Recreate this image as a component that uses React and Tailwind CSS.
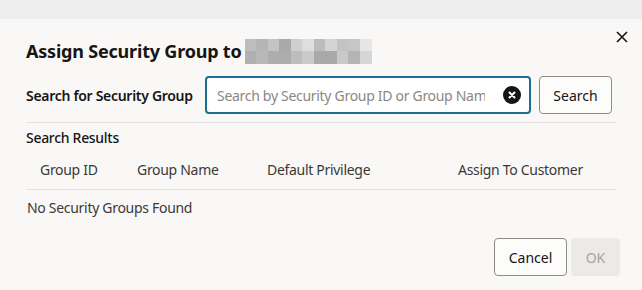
import React, { useState } from 'react';

const mosaicTop = ['#bdbdbd', '#b5b5b5', '#c4c4c4', '#a9a9a9', '#cfcfcf', '#dedede', '#bcbcbc', '#d4d4d4', '#c3c3c3', '#c6c6c6', '#e6e6e6'];
const mosaicBottom = ['#b0b0b0', '#b8b8b8', '#adadad', '#adadad', '#bdbdbd', '#cacaca', '#a9a9a9', '#a8a8a8', '#c9c9c9', '#b4b4b4', '#d6d6d6'];

const App = () => {
    const [query, setQuery] = useState('');

    return (
        <div className="w-[642px] h-[290px] bg-[#f9f8f6] text-[#161513] overflow-hidden" style={{ fontFamily: '"Noto Sans", sans-serif' }}>
            {/* blurred page behind the dialog */}
            <div className="h-[19px] bg-[#ededed]" />

            <div className="px-[26px] pt-[8px]">
                {/* Header */}
                <div className="flex items-start justify-between">
                    <div className="flex items-center gap-[3px] pt-[11px]">
                        <h1 className="text-[18px] font-bold leading-[26px] tracking-[-0.2px]">Assign Security Group to</h1>
                        <div className="flex flex-col w-[127px] h-[25px]">
                            <div className="flex flex-1">
                                {mosaicTop.map((c, i) => <div key={i} className="flex-1" style={{ background: c }} />)}
                            </div>
                            <div className="flex flex-1">
                                {mosaicBottom.map((c, i) => <div key={i} className="flex-1" style={{ background: c }} />)}
                            </div>
                        </div>
                    </div>
                    <button className="-mt-[2px] -mr-[18px] w-[24px] h-[24px] flex items-center justify-center text-[#161513]">
                        <svg width="12" height="12" viewBox="0 0 12 12" fill="none" stroke="currentColor" strokeWidth="1.6">
                            <path d="M1 1L11 11M11 1L1 11" />
                        </svg>
                    </button>
                </div>

                {/* Search row */}
                <div className="flex items-center mt-[12px] pb-[8px] border-b border-[#e4e2df]">
                    <label className="text-[14px] font-semibold w-[179px] shrink-0 tracking-[-0.3px]">Search for Security Group</label>
                    <div className="relative w-[326px] h-[38px]">
                        <input
                            type="text"
                            value={query}
                            onChange={(e) => setQuery(e.target.value)}
                            placeholder="Search by Security Group ID or Group Name"
                            className="w-full h-full pl-[10px] pr-[44px] border-2 border-[#1d6f8f] rounded-[4px] bg-white text-[14px] tracking-[-0.3px] placeholder:text-[#8a8783] outline-none"
                        />
                        <div className="absolute right-[10px] top-1/2 -translate-y-1/2 w-[18px] h-[18px] rounded-full bg-[#161513] flex items-center justify-center">
                            <svg width="8" height="8" viewBox="0 0 8 8" stroke="white" strokeWidth="2" strokeLinecap="round">
                                <path d="M1.5 1.5L6.5 6.5M6.5 1.5L1.5 6.5" />
                            </svg>
                        </div>
                    </div>
                    <button className="ml-[8px] w-[73px] h-[38px] border border-[#8e8c88] rounded-[4px] bg-[#fcfcfb] text-[14px]">
                        Search
                    </button>
                </div>

                {/* Results */}
                <div className="text-[14px] font-medium mt-[4px] tracking-[-0.3px]">Search Results</div>
                <div className="flex items-center h-[42px] pt-[2px] border-b border-[#e4e2df] text-[14px] text-[#3b3936] tracking-[-0.3px]">
                    <div className="pl-[14px] w-[111px]">Group ID</div>
                    <div className="w-[130px]">Group Name</div>
                    <div className="w-[191px]">Default Privilege</div>
                    <div>Assign To Customer</div>
                </div>
                <div className="text-[14px] text-[#3b3936] pl-[1px] pt-[7px] tracking-[-0.3px]">No Security Groups Found</div>

                {/* Footer */}
                <div className="flex justify-end gap-[4px] mt-[20px] -mr-[4px]">
                    <button className="w-[73px] h-[38px] border border-[#8e8c88] rounded-[4px] bg-[#fcfcfb] text-[14px]">Cancel</button>
                    <button disabled className="w-[49px] h-[38px] rounded-[4px] bg-[#eceae7] text-[14px] text-[#a8a5a0]">OK</button>
                </div>
            </div>
        </div>
    );
};

export default App;
